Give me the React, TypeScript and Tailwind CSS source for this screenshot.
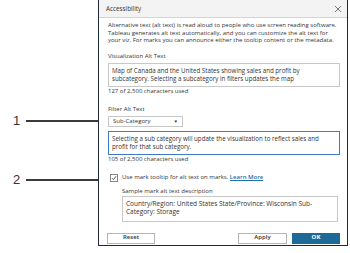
import React from 'react';

const font = { fontFamily: '"Open Sans", "Liberation Sans", sans-serif' };

const Callout = ({ n, className }: { n: string; className: string }) => (
  <div className={`flex items-center ${className}`}>
    <span className="w-[26px] pl-[13px] text-[13px] leading-none text-[#333]" style={{ fontFamily: '"Liberation Sans", sans-serif' }}>
      {n}
    </span>
    <div className="h-[2px] flex-1 bg-[#3a3a3a]" />
  </div>
);

const App = () => {
  return (
    <div className="flex h-[253px] w-[350px] bg-white text-[#333]" style={font}>
      <div className="flex w-[98px] shrink-0 flex-col">
        <Callout n="1" className="mt-[114px]" />
        <Callout n="2" className="mt-[46px]" />
      </div>

      <div className="flex h-[246px] w-[250px] shrink-0 flex-col overflow-hidden border-x border-b border-[#1e2a3a] bg-white text-[6px] leading-[7.5px]">
        <div className="flex h-[18px] shrink-0 items-center justify-between border-b border-[#d4d4d4] bg-[#f3f3f3] pl-[7px] pr-[5px] text-[#333]">
          <span className="text-[6.3px]">Accessibility</span>
          <svg width="8" height="8" viewBox="0 0 8 8" className="text-[#666]">
            <path d="M1 1 L7 7 M7 1 L1 7" stroke="currentColor" strokeWidth="0.9" />
          </svg>
        </div>

        <div className="flex flex-col pl-[9px] pr-[7px]">
          <p className="mt-[4px]">
            Alternative text (alt text) is read aloud to people who use screen reading software. Tableau generates alt text automatically, and you can customize the alt text for your viz. For marks you can announce either the tooltip content or the metadata.
          </p>

          <p className="mt-[8.5px]">Visualization Alt Text</p>
          <div className="mt-[2px] h-[24px] shrink-0 border border-[#c8c8c8] px-[3px] pt-[3px] text-[6.2px] leading-[8px]">
            Map of Canada and the United States showing sales and profit by subcategory. Selecting a subcategory in filters updates the map
          </div>
          <p className="mt-[1px]">127 of 2,500 characters used</p>

          <p className="mt-[11px]">Filter Alt Text</p>
          <div className="mt-[2.5px] flex h-[11px] w-[75px] shrink-0 items-center justify-between border border-[#c8c8c8] px-[4px]">
            <span>Sub-Category</span>
            <span className="text-[4.5px]">▼</span>
          </div>
          <div className="mt-[4px] h-[24px] shrink-0 border border-[#3e7bc2] px-[3px] pt-[3px] text-[6.2px] leading-[8px]">
            Selecting a sub category will update the visualization to reflect sales and profit for that sub category.
          </div>
          <p className="mt-[1px]">105 of 2,500 characters used</p>

          <div className="mt-[10px] flex h-[8px] items-center gap-[4px] pl-[2px]">
            <div className="flex h-[8px] w-[8px] items-center justify-center border border-[#888] bg-white">
              <svg width="6" height="6" viewBox="0 0 6 6">
                <path d="M1 3.2 L2.4 4.6 L5 1.2" fill="none" stroke="#333" strokeWidth="0.8" />
              </svg>
            </div>
            <span>
              Use mark tooltip for alt text on marks.{' '}
              <span className="font-semibold text-[#1f6fa8] underline">Learn More</span>
            </span>
          </div>

          <div className="ml-[14px] mr-[2px] flex flex-col">
            <p className="mt-[6px]">Sample mark alt text description</p>
            <div className="mt-[0.5px] h-[26px] border border-[#c8c8c8] px-[3px] pt-[3px] text-[6.5px] leading-[8px]">
              Country/Region: United States State/Province: Wisconsin Sub-Category: Storage
            </div>
          </div>

          <div className="mt-[11px] flex items-center">
            <button className="-ml-[1px] h-[11px] w-[48px] border border-[#b5b5b5] bg-white text-[6px] font-semibold text-[#333]">Reset</button>
            <div className="flex-1" />
            <button className="h-[11px] w-[49px] border border-[#b5b5b5] bg-white text-[6px] font-semibold text-[#333]">Apply</button>
            <button className="ml-[5px] h-[11px] w-[48px] bg-[#1d6a98] text-[6px] font-bold text-white">OK</button>
          </div>
        </div>
      </div>
    </div>
  );
};

export default App;
